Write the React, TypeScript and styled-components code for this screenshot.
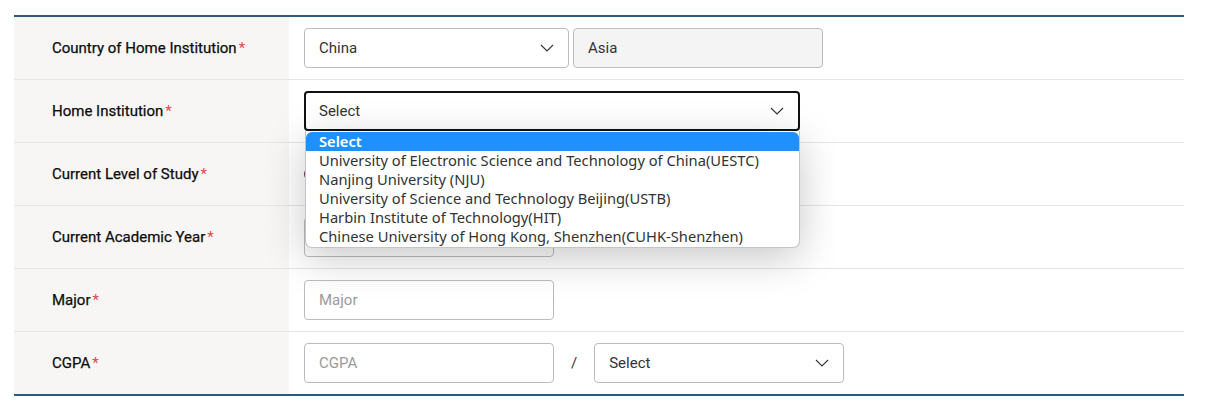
import React from "react";
import styled, { createGlobalStyle } from "styled-components";

const Global = createGlobalStyle`
  html, body { margin: 0; padding: 0; background: #fff; }
  body { font-family: Roboto, "Liberation Sans", sans-serif; }
  * { box-sizing: border-box; }
`;

const Page = styled.div`
  padding: 15px 32px 0 14px;
  width: 1216px;
`;

const Table = styled.div`
  border-top: 2px solid #2b5a7e;
  border-bottom: 2px solid #2b5a7e;
`;

const Row = styled.div<{ $last?: boolean }>`
  display: grid;
  grid-template-columns: 275px 1fr;
  height: ${(p) => (p.$last ? 62 : 63)}px;
  border-bottom: ${(p) => (p.$last ? "none" : "1px solid #e6e6e6")};
`;

const LabelCell = styled.div`
  background: #f7f6f5;
  display: flex;
  align-items: center;
  padding-left: 38px;
  font-size: 15px;
  font-weight: 400;
  color: #0d0d0d;
  -webkit-text-stroke: 0.25px #0d0d0d;
`;

const Star = styled.span`
  color: #e0474c;
  margin-left: 2px;
  -webkit-text-stroke: 0;
`;

const FieldCell = styled.div`
  position: relative;
  display: flex;
  align-items: center;
  padding-left: 15px;
  gap: 4px;
`;

const Box = styled.div<{ $w: number; $disabled?: boolean; $focus?: boolean; $placeholder?: boolean }>`
  position: relative;
  width: ${(p) => p.$w}px;
  height: 40px;
  border: ${(p) => (p.$focus ? "2px solid #111" : "1px solid #bcbcbc")};
  border-radius: 4px;
  background: ${(p) => (p.$disabled ? "#f4f4f4" : "#fff")};
  display: flex;
  align-items: center;
  padding-left: ${(p) => (p.$focus ? 13 : 14)}px;
  font-size: 15px;
  color: ${(p) => (p.$placeholder ? "#9a9a9a" : "#333")};
`;

const Chevron = styled.svg`
  position: absolute;
  right: 14px;
  top: 50%;
  margin-top: -4px;
`;

const Slash = styled.span`
  font-size: 15px;
  color: #333;
  margin: 0 13px;
`;

const Radio = styled.span`
  width: 14px;
  height: 14px;
  border-radius: 50%;
  border: 2px solid #8b1d3c;
`;

const Dropdown = styled.ul`
  position: absolute;
  left: 16px;
  top: 51px;
  width: 495px;
  margin: 0;
  padding: 1px 0;
  list-style: none;
  background: #fff;
  border: 1px solid #c4c4c4;
  border-top: none;
  border-radius: 0 0 7px 7px;
  box-shadow: 0 10px 40px rgba(0, 0, 0, 0.22);
  font-family: "Noto Sans", "Open Sans", sans-serif;
  font-size: 14.7px;
  z-index: 5;
`;

const Option = styled.li<{ $active?: boolean }>`
  height: 19px;
  line-height: 19px;
  padding-left: 13px;
  color: ${(p) => (p.$active ? "#fff" : "#333")};
  background: ${(p) => (p.$active ? "#1e90ff" : "transparent")};
  font-weight: ${(p) => (p.$active ? 600 : 400)};
  border-radius: ${(p) => (p.$active ? "6px 6px 0 0" : "0")};
  white-space: nowrap;
`;

const ChevronIcon = () => (
  <Chevron width="14" height="8" viewBox="0 0 14 8">
    <path d="M1 1 L7 7 L13 1" fill="none" stroke="#333" strokeWidth="1.1" />
  </Chevron>
);

const options = [
  "Select",
  "University of Electronic Science and Technology of China(UESTC)",
  "Nanjing University (NJU)",
  "University of Science and Technology Beijing(USTB)",
  "Harbin Institute of Technology(HIT)",
  "Chinese University of Hong Kong, Shenzhen(CUHK-Shenzhen)",
];

const Label = ({ text }: { text: string }) => (
  <LabelCell>
    {text}
    <Star>*</Star>
  </LabelCell>
);

export default function App() {
  return (
    <Page>
      <Global />
      <Table>
        <Row>
          <Label text="Country of Home Institution" />
          <FieldCell>
            <Box $w={265}>
              China
              <ChevronIcon />
            </Box>
            <Box $w={250} $disabled>
              Asia
            </Box>
          </FieldCell>
        </Row>
        <Row>
          <Label text="Home Institution" />
          <FieldCell>
            <Box $w={496} $focus>
              Select
              <ChevronIcon />
            </Box>
            <Dropdown>
              {options.map((o, i) => (
                <Option key={o} $active={i === 0}>
                  {o}
                </Option>
              ))}
            </Dropdown>
          </FieldCell>
        </Row>
        <Row>
          <Label text="Current Level of Study" />
          <FieldCell>
            <Radio />
          </FieldCell>
        </Row>
        <Row>
          <Label text="Current Academic Year" />
          <FieldCell>
            <Box $w={250}>
              <ChevronIcon />
            </Box>
          </FieldCell>
        </Row>
        <Row>
          <Label text="Major" />
          <FieldCell>
            <Box $w={250} $placeholder>
              Major
            </Box>
          </FieldCell>
        </Row>
        <Row $last>
          <Label text="CGPA" />
          <FieldCell>
            <Box $w={250} $placeholder>
              CGPA
            </Box>
            <Slash>/</Slash>
            <Box $w={250}>
              Select
              <ChevronIcon />
            </Box>
          </FieldCell>
        </Row>
      </Table>
    </Page>
  );
}
